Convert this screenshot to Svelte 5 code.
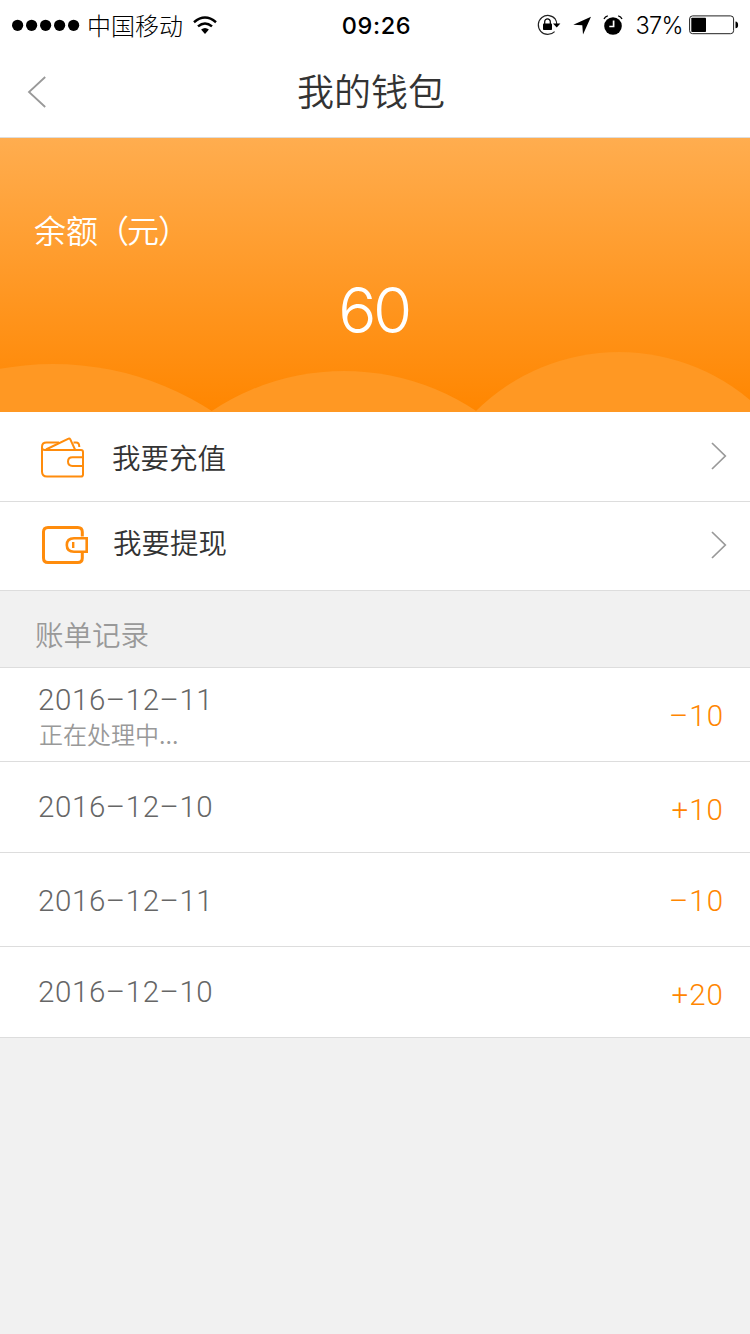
<script>
  const records = [
    { date: '2016–12–11', note: '正在处理中...', amount: '–10', height: 94, lift: 2 },
    { date: '2016–12–10', amount: '+10', height: 91, lift: 0 },
    { date: '2016–12–11', amount: '–10', height: 94, lift: 3 },
    { date: '2016–12–10', amount: '+20', height: 91, lift: 0 }
  ];
</script>

<div class="screen">
  <header>
    <div class="status">
      <div class="left">
        <svg width="68" height="12" viewBox="0 0 68 12">
          {#each [0, 1, 2, 3, 4] as i}
            <circle cx={5.6 + i * 14} cy="6.3" r="5.6" />
          {/each}
        </svg>
        <span class="carrier">中国移动</span>
        <svg class="wifi" width="24" height="19" viewBox="0 0 24 19" fill="none" stroke="#000" stroke-width="2.5">
          <path d="M1 6.2Q12-3.2 23 6.2M5 10.4Q12 4.6 19 10.4" />
          <path d="M8.1 13.5Q12 10.3 15.9 13.5L12 18Z" fill="#000" stroke="none" />
        </svg>
      </div>
      <span class="clock">09:26</span>
      <div class="right">
        <svg width="24" height="22" viewBox="0 0 24 22">
          <path d="M18.6 5.5A9.5 9.5 0 1 0 17.6 17.6M18.2 5Q19.8 7.5 19.7 10" fill="none" stroke="#222" stroke-width="1.2" />
          <path d="M16 9.6h7.4l-3.7 4z" />
          <rect x="6" y="9.5" width="9" height="6.5" rx=".8" />
          <path d="M7.7 10V7.7a2.8 2.8 0 0 1 5.6 0V10" fill="none" stroke="#000" stroke-width="1.2" />
        </svg>
        <svg class="arrow" width="19" height="19" viewBox="0 0 19 19"><path d="M18 .7L10 18.5L9.3 9.3L.3 8.8Z" /></svg>
        <svg class="alarm" width="20" height="20" viewBox="0 0 20 20">
          <circle cx="10" cy="11" r="8.8" />
          <path d="M1 4Q2 1.4 4.8.9M15.2.9Q18 1.4 19 4" fill="none" stroke="#000" stroke-width="1.3" />
          <path d="M10.6 5.5v6H6.3" fill="none" stroke="#fff" stroke-width="1.7" />
        </svg>
        <span class="percent">37%</span>
        <svg class="battery" width="50" height="20" viewBox="0 0 50 20">
          <rect x=".6" y=".9" width="44" height="17.8" rx="3" fill="#fff" stroke="#222" stroke-width="1" />
          <rect x="2.3" y="2.7" width="14.7" height="14.3" rx=".8" />
          <path d="M46.5 6.5q2.6.3 2.6 3.4t-2.6 3.4z" />
        </svg>
      </div>
    </div>
    <div class="nav">
      <svg width="20" height="34" viewBox="0 0 20 34" fill="none" stroke="#999" stroke-width="1.8">
        <path d="M18.2 2L2 17L18.2 32" />
      </svg>
      <h1>我的钱包</h1>
    </div>
  </header>

  <section class="balance">
    <svg class="hills" width="750" height="60" viewBox="0 0 750 60" fill="#ff9823">
      <circle cx="53" cy="304" r="292" />
      <circle cx="344" cy="257" r="238" />
      <circle cx="619" cy="203" r="203" />
    </svg>
    <div class="label">余额<span class="open">（</span><span class="unit">元</span><span class="close">）</span></div>
    <div class="sum">60</div>
  </section>

  <div class="action first">
    <svg class="icon" width="50" height="44" viewBox="0 0 50 44" fill="none" stroke="#ff8c0c" stroke-width="2" stroke-linejoin="round">
      <path d="M2 12.5Q2 15 5 15H41Q43 15 43 17V39.5Q43 41.6 41 41.6H7Q2 41.6 2 36.6V12Q2 7.6 6.5 7.6H19" />
      <path d="M6 14.5L28.6 3.6Q29.6 3.2 30.2 4.2L35 14.5M33.5 7.6H36Q39.3 7.6 39.3 12" />
      <path d="M43 22.2H32.5Q28 22.2 28 26.6T32.5 31H43" />
    </svg>
    <span>我要充值</span>
    <svg class="chevron" width="18" height="30" viewBox="0 0 18 30"><path d="M2 2L15.3 15L2 28" /></svg>
  </div>
  <div class="action second">
    <svg class="icon" width="50" height="44" viewBox="0 0 50 44" fill="none" stroke="#ff8c0c" stroke-width="3">
      <path d="M42.3 12.5V8Q42.3 3.5 37.8 3.5H8Q3.5 3.5 3.5 8V34Q3.5 38.5 8 38.5H37.8Q42.3 38.5 42.3 34V29" />
      <path d="M46.7 14.2V27.7H34Q26.8 27.7 26.8 21T34 14.2Z" stroke-width="2.6" />
      <path d="M33.2 18V24" stroke-width="2.4" />
    </svg>
    <span>我要提现</span>
    <svg class="chevron" width="18" height="30" viewBox="0 0 18 30"><path d="M2 2L15.3 15L2 28" /></svg>
  </div>

  <h2>账单记录</h2>

  {#each records as r}
    <div class="record" style="height: {r.height}px">
      <div class="info">
        <div class="date" style="margin-top: {r.lift}px">{r.date}</div>
        {#if r.note}<div class="note">{r.note}</div>{/if}
      </div>
      <div class="amount" class:plus={r.amount[0] === '+'}>{r.amount}</div>
    </div>
  {/each}
</div>

<style>
  :global(body) {
    margin: 0;
    background: #f1f1f1;
  }
  .screen {
    width: 750px;
    height: 1334px;
    overflow: hidden;
    background: #f1f1f1;
    font-family: 'Noto Sans CJK SC', sans-serif;
    font-weight: 350;
    color: #333;
  }
  svg {
    display: block;
    flex: none;
  }
  * {
    box-sizing: border-box;
    white-space: nowrap;
  }
  header {
    height: 138px;
    background: #fff;
    border-bottom: 1px solid #ddd;
  }
  .status {
    height: 50px;
    display: grid;
    grid-template-columns: 1fr auto 1fr;
    align-items: center;
    padding: 0 12px;
    color: #000;
  }
  .left,
  .right {
    display: flex;
    align-items: center;
  }
  .right {
    justify-content: flex-end;
  }
  .carrier {
    font-size: 24px;
    line-height: 36px;
    margin-left: 7px;
    font-weight: 300;
  }
  .wifi {
    margin-left: 10px;
  }
  .clock {
    font: 500 23.5px/36px Inter, sans-serif;
    letter-spacing: 0.6px;
    padding: 2px 0 0 3px;
  }
  .arrow {
    margin-left: 12px;
  }
  .alarm {
    margin-left: 11px;
  }
  .percent {
    font: 300 23.5px/36px Inter, sans-serif;
    letter-spacing: -0.6px;
    margin: 0 6px 0 12px;
    padding-top: 2px;
  }
  .battery {
    margin-right: -1px;
  }
  .nav {
    height: 84px;
    display: flex;
    align-items: center;
    padding-left: 27px;
  }
  h1 {
    flex: 1;
    margin: -5px 55px 0 0;
    text-align: center;
    font-size: 37px;
    line-height: 54px;
    font-weight: inherit;
  }
  .balance {
    position: relative;
    height: 274px;
    padding-top: 67px;
    background: linear-gradient(#ffad4f, #ff8600);
    color: #fff;
  }
  .hills {
    position: absolute;
    left: 0;
    bottom: 0;
  }
  .label {
    padding-left: 34px;
    font-size: 32px;
    line-height: 48px;
  }
  .unit {
    margin-left: -2px;
  }
  .close {
    margin-left: -1px;
  }
  .open {
    margin-left: -1px;
  }
  .sum {
    position: relative;
    margin-top: 22px;
    padding-right: 3px;
    text-align: center;
    font: 300 63.5px/70px Inter, sans-serif;
    letter-spacing: -3.5px;
  }
  .action {
    display: flex;
    align-items: center;
    height: 90px;
    padding: 0 22px 0 40px;
    background: #fff;
    border-bottom: 1px solid #ddd;
    font-size: 28.5px;
  }
  .action.second {
    height: 89px;
  }
  .action span {
    flex: 1;
    margin-left: 22px;
  }
  .first .icon {
    margin-top: 1px;
  }
  .second span {
    margin: -9px 0 0 23px;
  }
  .chevron {
    margin-top: -2px;
  }
  .chevron path {
    fill: none;
    stroke: #999;
    stroke-width: 1.7;
  }
  h2 {
    margin: 0;
    height: 77px;
    padding: 8px 0 0 35px;
    border-bottom: 1px solid #ddd;
    font-size: 28.5px;
    line-height: 70px;
    font-weight: inherit;
    color: #999;
  }
  .record {
    display: flex;
    align-items: center;
    justify-content: space-between;
    padding: 0 26px 0 37px;
    background: #fff;
    border-bottom: 1px solid #ddd;
  }
  .date,
  .amount {
    font: 350 29.5px/36px Roboto, sans-serif;
    letter-spacing: 0.6px;
    color: #666;
  }
  .date {
    padding-left: 1px;
  }
  .amount {
    color: #ff8600;
    letter-spacing: 1px;
    padding-top: 2px;
  }
  .amount.plus {
    padding-top: 5px;
  }
  .note {
    padding-left: 2px;
    font-size: 24px;
    line-height: 32px;
    color: #999;
  }
</style>
